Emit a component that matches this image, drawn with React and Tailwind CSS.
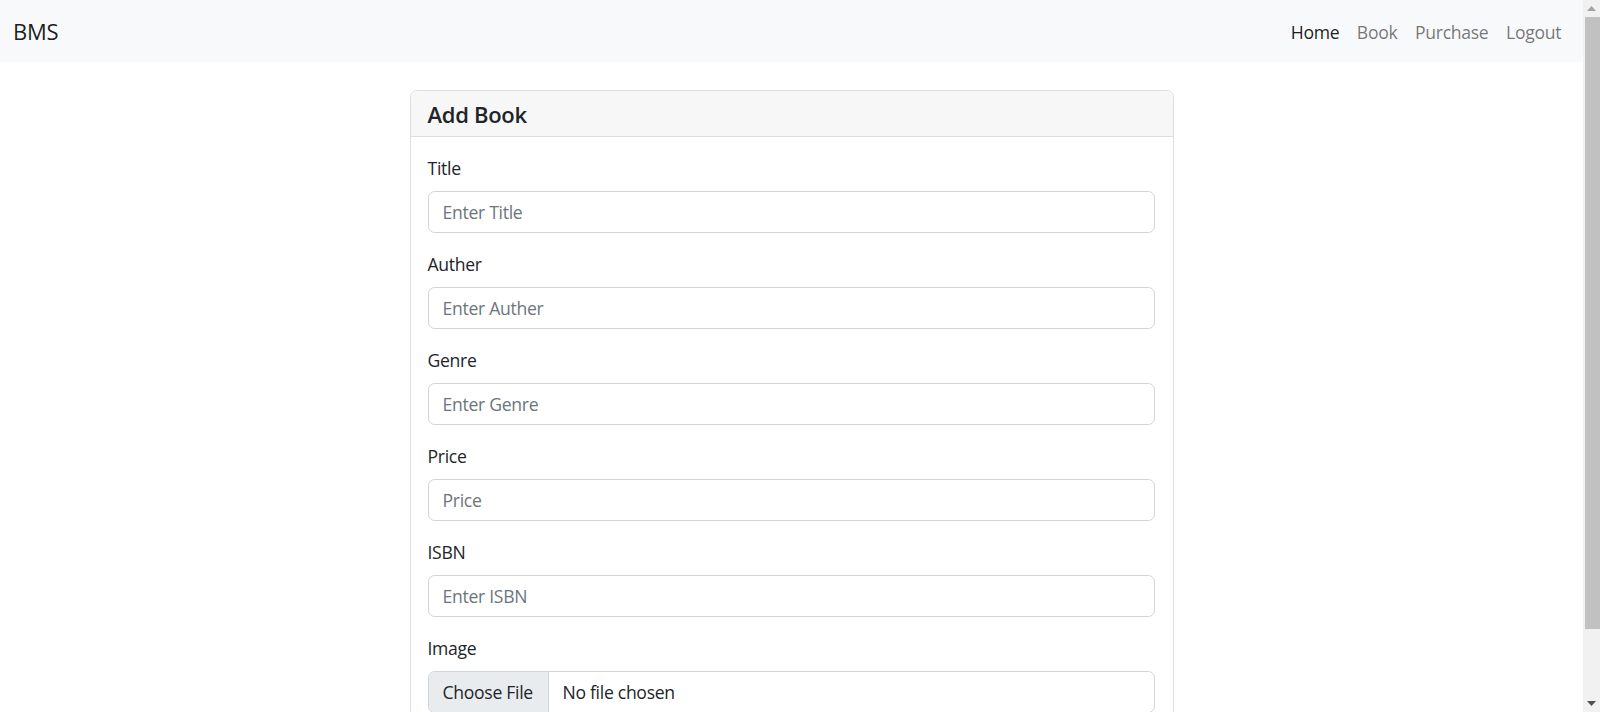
export default function App() {
  const fields = [
    { label: "Title", ph: "Enter Title" },
    { label: "Auther", ph: "Enter Auther" },
    { label: "Genre", ph: "Enter Genre" },
    { label: "Price", ph: "Price" },
    { label: "ISBN", ph: "Enter ISBN" },
  ];
  return (
    <div className="flex h-[712px] overflow-hidden bg-white font-['Open_Sans',sans-serif] text-[#212529] tracking-[-0.3px]">
      <div className="flex-1 min-w-0 flex flex-col">
        <nav className="h-[62px] shrink-0 bg-[#f8f9fa] flex items-center justify-between px-[13px] pt-[1px]">
          <a className="text-[22px] leading-[33px] text-black/90">BMS</a>
          <ul className="flex text-[17.6px] leading-[26px]">
            <li className="px-[8.8px] text-black/90">Home</li>
            <li className="px-[8.8px] text-black/55">Book</li>
            <li className="px-[8.8px] text-black/55">Purchase</li>
            <li className="px-[8.8px] text-black/55">Logout</li>
          </ul>
        </nav>
        <div className="pt-[28px]">
          <div className="mx-auto w-[764px] border border-[#dfdfdf] rounded-[6.6px] overflow-hidden">
            <div className="h-[46px] bg-[#f7f7f7] border-b border-[#dfdfdf] px-[17px] flex items-center">
              <h4 className="text-[22px] font-semibold leading-[28px]">Add Book</h4>
            </div>
            <div className="px-[17px] pt-[18px] pr-[18px] pb-[60px]">
              {fields.map((f) => (
                <div key={f.label} className="mb-[18px]">
                  <label className="block text-[17.6px] leading-[26px] mb-[10px]">{f.label}</label>
                  <input
                    className="block w-full h-[42px] border border-[#ced4da] rounded-[6.6px] px-[14px] text-[17.6px] outline-none placeholder:text-[#6c757d]"
                    placeholder={f.ph}
                  />
                </div>
              ))}
              <div>
                <label className="block text-[17.6px] leading-[26px] mb-[10px]">Image</label>
                <div className="flex h-[42px] border border-[#ced4da] rounded-[6.6px] overflow-hidden text-[17.6px]">
                  <div className="w-[120px] bg-[#e9ecef] border-r border-[#ced4da] flex items-center px-[14px]">Choose File</div>
                  <div className="flex items-center px-[14px]">No file chosen</div>
                </div>
              </div>
            </div>
          </div>
        </div>
      </div>
      <div className="w-[17px] shrink-0 bg-[#f1f1f1] flex flex-col">
        <div className="h-[17px] flex items-center justify-center">
          <svg width="9" height="5" viewBox="0 0 9 5"><path d="M4.5 0 L9 5 L0 5 Z" fill="#a3a3a3" /></svg>
        </div>
        <div className="h-[612px] ml-[2px] bg-[#c1c1c1]" />
        <div className="flex-1" />
        <div className="h-[17px] flex items-center justify-center">
          <svg width="9" height="5" viewBox="0 0 9 5"><path d="M0 0 L9 0 L4.5 5 Z" fill="#505050" /></svg>
        </div>
      </div>
    </div>
  );
}
